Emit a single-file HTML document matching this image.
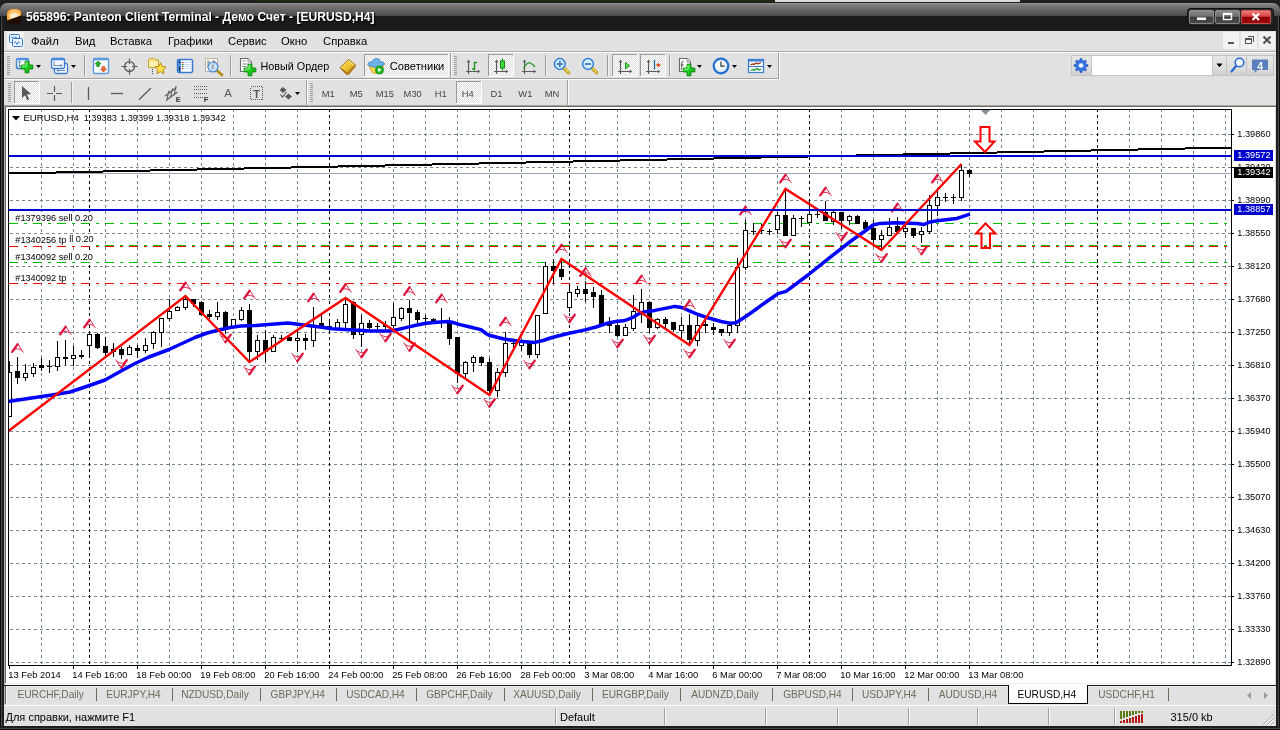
<!DOCTYPE html><html><head><meta charset="utf-8"><title>565896: Panteon Client Terminal</title><style>
*{box-sizing:border-box}
html,body{margin:0;padding:0}
body{width:1280px;height:730px;overflow:hidden;background:#1d1d1d;font-family:"Liberation Sans",sans-serif;}
#root{position:relative;width:1280px;height:730px;overflow:hidden;background:#1d1d1d;will-change:transform;-webkit-font-smoothing:antialiased}
.a{position:absolute}
.t{position:absolute;white-space:pre;line-height:1;color:#000}
#title{left:0;top:3px;width:1280px;height:28px;border-radius:7px 7px 0 0;
 background:linear-gradient(#9a9a9a 0,#858587 1px,#7c7c7e 2px,#6a6a6c 6px,#565658 10px,#48484a 13px,#1b1b1d 13px,#1b1b1d 100%);}
#client{left:4px;top:31px;width:1272px;height:695px;background:#e1e1e1}
.menu{font-size:11.3px;top:35px}
.tab{font-size:10.2px;color:#6e6e5e;top:689px}
.sep{position:absolute;width:1px;background:#8a8a8a}
</style></head><body><div id="root">
<div class="a" style="left:0;top:0;width:1280px;height:3px;background:#202020"></div>
<div class="a" style="left:255px;top:0;width:520px;height:2px;background:#1c2a14"></div>
<div class="a" style="left:775px;top:0;width:245px;height:2px;background:#d4d8dc"></div>
<div id="title" class="a"></div>
<div class="a" style="left:0;top:16px;width:4px;height:714px;background:linear-gradient(90deg,#0c0c0c 0,#0c0c0c 1px,#4a4a4c 1px,#4a4a4c 2px,#1e1e20 2px)"></div>
<div class="a" style="left:1276px;top:16px;width:4px;height:714px;background:linear-gradient(270deg,#0c0c0c 0,#0c0c0c 1px,#4a4a4c 1px,#4a4a4c 2px,#1e1e20 2px)"></div>
<div class="a" style="left:0;top:726px;width:1280px;height:4px;background:linear-gradient(0deg,#0c0c0c 0,#0c0c0c 1px,#4a4a4c 1px,#4a4a4c 2px,#1e1e20 2px)"></div>
<div id="client" class="a"></div>
<span class="t " style="left:26px;top:11px;font-size:12.14px;font-weight:700;color:#fff;text-shadow:1px 1px 1px #000">565896: Panteon Client Terminal - Демо Счет - [EURUSD,H4]</span>
<span class="t menu" style="left:31px;top:35.6px;">Файл</span>
<span class="t menu" style="left:75px;top:35.6px;">Вид</span>
<span class="t menu" style="left:110px;top:35.6px;">Вставка</span>
<span class="t menu" style="left:168px;top:35.6px;">Графики</span>
<span class="t menu" style="left:228px;top:35.6px;">Сервис</span>
<span class="t menu" style="left:281px;top:35.6px;">Окно</span>
<span class="t menu" style="left:323px;top:35.6px;">Справка</span>
<svg class="a" style="left:0;top:0" width="1280" height="110" viewBox="0 0 1280 110">
<defs>
<pattern id="chk" width="2" height="2" patternUnits="userSpaceOnUse"><rect width="2" height="2" fill="#dedede"/><rect width="1" height="1" fill="#fff"/><rect x="1" y="1" width="1" height="1" fill="#fff"/></pattern>
<linearGradient id="gplus" x1="0" y1="0" x2="1" y2="1"><stop offset="0" stop-color="#6cf06c"/><stop offset=".5" stop-color="#1fd01f"/><stop offset="1" stop-color="#0aa00a"/></linearGradient>
<linearGradient id="bwin" x1="0" y1="0" x2="0" y2="1"><stop offset="0" stop-color="#5aa0e6"/><stop offset="1" stop-color="#2f72c4"/></linearGradient>
<linearGradient id="gold" x1="0" y1="0" x2="1" y2="1"><stop offset="0" stop-color="#ffe88a"/><stop offset=".5" stop-color="#f0c030"/><stop offset="1" stop-color="#b07a10"/></linearGradient>
<radialGradient id="clk" cx=".4" cy=".35" r=".7"><stop offset="0" stop-color="#fff"/><stop offset=".7" stop-color="#e8f0f8"/><stop offset="1" stop-color="#b8cde0"/></radialGradient>
<linearGradient id="btnf" x1="0" y1="0" x2="0" y2="1"><stop offset="0" stop-color="#e6e6e6"/><stop offset=".6" stop-color="#dedede"/><stop offset="1" stop-color="#cfcfcf"/></linearGradient>
</defs>
<g shape-rendering="crispEdges">
<rect x="4" y="51" width="1272" height="1" fill="#ababab"/><rect x="4" y="52" width="1272" height="1" fill="#fbfbfb"/>
<rect x="4" y="78" width="776" height="1" fill="#a0a0a0"/><rect x="4" y="79" width="776" height="1" fill="#fbfbfb"/>

<rect x="450" y="53" width="1" height="25" fill="#a0a0a0"/><rect x="451" y="53" width="1" height="25" fill="#fbfbfb"/>
<rect x="778" y="53" width="1" height="26" fill="#a0a0a0"/><rect x="779" y="53" width="1" height="26" fill="#fbfbfb"/>
<rect x="306" y="80" width="1" height="25" fill="#a0a0a0"/><rect x="307" y="80" width="1" height="25" fill="#fbfbfb"/>
<rect x="567" y="80" width="1" height="25" fill="#a0a0a0"/><rect x="568" y="80" width="1" height="25" fill="#fbfbfb"/>
<rect x="7" y="56" width="3" height="1" fill="#9c9c9c"/><rect x="7" y="58" width="3" height="1" fill="#9c9c9c"/><rect x="7" y="60" width="3" height="1" fill="#9c9c9c"/><rect x="7" y="62" width="3" height="1" fill="#9c9c9c"/><rect x="7" y="64" width="3" height="1" fill="#9c9c9c"/><rect x="7" y="66" width="3" height="1" fill="#9c9c9c"/><rect x="7" y="68" width="3" height="1" fill="#9c9c9c"/><rect x="7" y="70" width="3" height="1" fill="#9c9c9c"/><rect x="7" y="72" width="3" height="1" fill="#9c9c9c"/><rect x="7" y="74" width="3" height="1" fill="#9c9c9c"/>
<rect x="454" y="56" width="3" height="1" fill="#9c9c9c"/><rect x="454" y="58" width="3" height="1" fill="#9c9c9c"/><rect x="454" y="60" width="3" height="1" fill="#9c9c9c"/><rect x="454" y="62" width="3" height="1" fill="#9c9c9c"/><rect x="454" y="64" width="3" height="1" fill="#9c9c9c"/><rect x="454" y="66" width="3" height="1" fill="#9c9c9c"/><rect x="454" y="68" width="3" height="1" fill="#9c9c9c"/><rect x="454" y="70" width="3" height="1" fill="#9c9c9c"/><rect x="454" y="72" width="3" height="1" fill="#9c9c9c"/><rect x="454" y="74" width="3" height="1" fill="#9c9c9c"/>
<rect x="8" y="83" width="3" height="1" fill="#9c9c9c"/><rect x="8" y="85" width="3" height="1" fill="#9c9c9c"/><rect x="8" y="87" width="3" height="1" fill="#9c9c9c"/><rect x="8" y="89" width="3" height="1" fill="#9c9c9c"/><rect x="8" y="91" width="3" height="1" fill="#9c9c9c"/><rect x="8" y="93" width="3" height="1" fill="#9c9c9c"/><rect x="8" y="95" width="3" height="1" fill="#9c9c9c"/><rect x="8" y="97" width="3" height="1" fill="#9c9c9c"/><rect x="8" y="99" width="3" height="1" fill="#9c9c9c"/><rect x="8" y="101" width="3" height="1" fill="#9c9c9c"/>
<rect x="310" y="83" width="3" height="1" fill="#9c9c9c"/><rect x="310" y="85" width="3" height="1" fill="#9c9c9c"/><rect x="310" y="87" width="3" height="1" fill="#9c9c9c"/><rect x="310" y="89" width="3" height="1" fill="#9c9c9c"/><rect x="310" y="91" width="3" height="1" fill="#9c9c9c"/><rect x="310" y="93" width="3" height="1" fill="#9c9c9c"/><rect x="310" y="95" width="3" height="1" fill="#9c9c9c"/><rect x="310" y="97" width="3" height="1" fill="#9c9c9c"/><rect x="310" y="99" width="3" height="1" fill="#9c9c9c"/><rect x="310" y="101" width="3" height="1" fill="#9c9c9c"/>
<rect x="84" y="55" width="1" height="21" fill="#9a9a9a"/><rect x="85" y="55" width="1" height="21" fill="#f4f4f4"/>
<rect x="230" y="55" width="1" height="21" fill="#9a9a9a"/><rect x="231" y="55" width="1" height="21" fill="#f4f4f4"/>
<rect x="545" y="55" width="1" height="21" fill="#9a9a9a"/><rect x="546" y="55" width="1" height="21" fill="#f4f4f4"/>
<rect x="607" y="55" width="1" height="21" fill="#9a9a9a"/><rect x="608" y="55" width="1" height="21" fill="#f4f4f4"/>
<rect x="669" y="55" width="1" height="21" fill="#9a9a9a"/><rect x="670" y="55" width="1" height="21" fill="#f4f4f4"/>
<rect x="71" y="82" width="1" height="21" fill="#9a9a9a"/><rect x="72" y="82" width="1" height="21" fill="#f4f4f4"/>
<rect x="365" y="55" width="83" height="21" fill="url(#chk)"/><rect x="364" y="54" width="84" height="1" fill="#9a9a9a"/><rect x="364" y="54" width="1" height="22" fill="#9a9a9a"/><rect x="364" y="76" width="85" height="1" fill="#fff"/><rect x="448" y="54" width="1" height="23" fill="#fff"/>
<rect x="489" y="55" width="24" height="21" fill="url(#chk)"/><rect x="488" y="54" width="25" height="1" fill="#9a9a9a"/><rect x="488" y="54" width="1" height="22" fill="#9a9a9a"/><rect x="488" y="76" width="26" height="1" fill="#fff"/><rect x="513" y="54" width="1" height="23" fill="#fff"/>
<rect x="613" y="55" width="24" height="21" fill="url(#chk)"/><rect x="612" y="54" width="25" height="1" fill="#9a9a9a"/><rect x="612" y="54" width="1" height="22" fill="#9a9a9a"/><rect x="612" y="76" width="26" height="1" fill="#fff"/><rect x="637" y="54" width="1" height="23" fill="#fff"/>
<rect x="641" y="55" width="24" height="21" fill="url(#chk)"/><rect x="640" y="54" width="25" height="1" fill="#9a9a9a"/><rect x="640" y="54" width="1" height="22" fill="#9a9a9a"/><rect x="640" y="76" width="26" height="1" fill="#fff"/><rect x="665" y="54" width="1" height="23" fill="#fff"/>
<rect x="15" y="82" width="24" height="21" fill="url(#chk)"/><rect x="14" y="81" width="25" height="1" fill="#9a9a9a"/><rect x="14" y="81" width="1" height="22" fill="#9a9a9a"/><rect x="14" y="103" width="26" height="1" fill="#fff"/><rect x="39" y="81" width="1" height="23" fill="#fff"/>
<rect x="457" y="82" width="24" height="21" fill="url(#chk)"/><rect x="456" y="81" width="25" height="1" fill="#9a9a9a"/><rect x="456" y="81" width="1" height="22" fill="#9a9a9a"/><rect x="456" y="103" width="26" height="1" fill="#fff"/><rect x="481" y="81" width="1" height="23" fill="#fff"/>
</g>
<rect x="7" y="32" width="17" height="17" fill="#f4f4f4"/>
<g fill="#eef5ff" stroke="#3b7bd8" stroke-width="1"><rect x="9.5" y="34.5" width="10" height="8" rx="1"/><rect x="12.5" y="38.5" width="10" height="8" rx="1"/></g>
<path d="M14 43.5l1.5-2 1.5 3 1.5-3 1.5 2" stroke="#3b7bd8" fill="none" stroke-width=".9"/><path d="M11 37.5h2l1-1 1 1h2" stroke="#3b7bd8" fill="none" stroke-width=".9"/>
<rect x="16.5" y="58.5" width="12" height="10" rx="1.5" fill="#f4f9ff" stroke="url(#bwin)" stroke-width="1.4"/><rect x="16.5" y="58.3" width="12" height="2" fill="#4a8fdc"/>
<path d="M19.5 61v6M18 62.5l1.5-1.5 1.5 1.5M18 65.5l1.5 1.5 1.5-1.5" stroke="#6f8fb0" fill="none" stroke-width="1"/>
<path d="M25.1 61.2H28.9V65.1H32.8V68.9H28.9V72.8H25.1V68.9H21.2V65.1H25.1Z" fill="url(#gplus)" stroke="#0a8a0a" stroke-width="1"/><path d="M26.1 62.2V66.1H22.2" stroke="#8cff8c" stroke-width="1" fill="none" opacity=".9"/>
<path d="M36 65H41L38.5 68Z" fill="#000"/>
<rect x="54.5" y="63.5" width="13" height="10" rx="1.5" fill="#f4f9ff" stroke="#3b7bd0" stroke-width="1.3"/>
<rect x="51.5" y="58.5" width="13" height="10" rx="1.5" fill="#f4f9ff" stroke="#3b7bd0" stroke-width="1.3"/><rect x="51.5" y="58.3" width="13" height="2" fill="#4a8fdc"/>
<path d="M54 61v5M54 65.5h8M60.5 64l1.5 1.5-1.5 1.5M57 70.5h8M58.5 69l-1.5 1.5 1.5 1.5" stroke="#6f8fb0" fill="none" stroke-width="1"/>
<path d="M71 65H76L73.5 68Z" fill="#000"/>
<rect x="93.5" y="58.5" width="15" height="15" rx="1.5" fill="#fbfdff" stroke="#5a9ae0" stroke-width="1.4"/><rect x="93.5" y="58.3" width="15" height="2" fill="#5a9ae0"/>
<path d="M98 61l3 3h-1.7v2.5h-2.6V64H95z" fill="#22b022" stroke="#0f7f0f" stroke-width=".6"/><path d="M103.5 72l3-3h-1.7v-2.5h-2.6V69h-1.7z" fill="#f06a30" stroke="#c0401a" stroke-width=".6"/>
<g stroke="#5a5a5a" fill="none"><circle cx="129.5" cy="66.5" r="5" stroke-width="1.25"/><path d="M129.5 58.5v5.5M129.5 69v5.5M121.5 66.5h5.5M132 66.5h5.5" stroke-width="1.15"/></g>
<path d="M148.5 60.5q0-2 2-2h3q1.5 0 2 1.5h3v7.5h-10z" fill="#fbe58a" stroke="#c9a020" stroke-width="1"/><rect x="149" y="61.5" width="9" height="5.5" fill="#fdf0b0"/>
<path d="M152.5 69v1M152.5 71v1M152.5 73v1" stroke="#444" stroke-width="1"/>
<path d="M160.5 62.8l1.7 3.6 3.9.5-2.9 2.7.8 3.9-3.5-1.9-3.5 1.9.8-3.9-2.9-2.7 3.9-.5z" fill="#ffe04a" stroke="#c08a10" stroke-width="1"/>
<rect x="177.5" y="59.5" width="15" height="13" rx="1.5" fill="#fff" stroke="#3878d0" stroke-width="1.5"/><rect x="178" y="60" width="3" height="12" fill="#4a8ad8"/>
<path d="M183 62.5h9M183 64.5h9M183 66.5h9M183 68.5h9" stroke="#b8d0f0" stroke-width=".8"/><rect x="182" y="62" width="1.3" height="1.2" fill="#e02020"/><rect x="182" y="64" width="1.3" height="1.2" fill="#207020"/><rect x="182" y="66" width="1.3" height="1.2" fill="#207020"/><rect x="182" y="68" width="1.3" height="1.2" fill="#e02020"/><rect x="179" y="61.5" width="1" height="1.5" fill="#111"/><rect x="179" y="67" width="1" height="4" fill="#223"/>
<rect x="205.5" y="58.5" width="12" height="13" fill="#fbf9f2" stroke="#b9b4a4" stroke-width="1"/><path d="M208 60v8M208 62h2M213.5 60v6M213.5 61.5h2" stroke="#777" stroke-width=".9" fill="none"/>
<path d="M217 70.5l5 4.5" stroke="#b8860b" stroke-width="2.6" stroke-linecap="round"/><circle cx="213" cy="67" r="4.9" fill="#cfe4f8" fill-opacity=".85" stroke="#4a90e0" stroke-width="1.3"/><rect x="211.3" y="64.5" width="3" height="5" fill="#8aa0b8" opacity=".7"/>
<path d="M240.5 58.5H248L251.5 62V71.5H240.5Z" fill="#fdfdfd" stroke="#6a6a6a" stroke-width="1.1"/><path d="M248 58.5V62H251.5" fill="#dcdcdc" stroke="#8b8b8b" stroke-width=".8"/>
<path d="M242.5 61h3M242.5 64h6M242.5 66.5h4" stroke="#888" stroke-width="1.2"/>
<path d="M248.1 64.2H251.9V68.1H255.8V71.9H251.9V75.8H248.1V71.9H244.2V68.1H248.1Z" fill="url(#gplus)" stroke="#0a8a0a" stroke-width="1"/><path d="M249.1 65.2V69.1H245.2" stroke="#8cff8c" stroke-width="1" fill="none" opacity=".9"/>
<path d="M340 67.5l8.5-8 7.5 6-7 8.5q-1.5 1-3 0z" fill="url(#gold)" stroke="#a87510" stroke-width="1"/><path d="M341 68.5l6.5 5 7-7.5" fill="none" stroke="#8a5a08" stroke-width="1"/><path d="M348.8 61l5 4" stroke="#fff3b0" stroke-width="1"/>
<path d="M369 66l3.5 6.5q3 1.8 8 0l3-6.5z" fill="#f7d64a" stroke="#c59a1a" stroke-width=".9"/>
<path d="M367.5 64.5q1-3.3 5-2.8 .6-3.2 4-3.2 3.2 0 4 3.2 3.5-.3 4.2 2.4-3.5 3.2-8.5 3.2t-8.7-2.800z" fill="#6db3e8" stroke="#3b86c8" stroke-width=".9"/>
<circle cx="379.5" cy="70" r="4" fill="#22b422" stroke="#0d8a0d" stroke-width=".8"/><path d="M378.2 67.800l3.3 2.2-3.3 2.200z" fill="#fff"/>
<g stroke="#5a5a5a" stroke-width="1.15" fill="none"><path d="M468.5 61V74M466 71.5H479"/></g><path d="M468.5 59.5L470.3 62.3H466.7Z M480.3 71.5L477.7 69.7V73.3Z" fill="#5a5a5a"/>
<path d="M474.5 62v8.500M474.5 62.500h2.500M472 69h2.5" stroke="#1a9a1a" stroke-width="1.4" fill="none"/>
<g stroke="#5a5a5a" stroke-width="1.15" fill="none"><path d="M496.5 61V74M494 71.5H507"/></g><path d="M496.5 59.5L498.3 62.3H494.7Z M508.3 71.5L505.7 69.7V73.3Z" fill="#5a5a5a"/>
<path d="M502.5 58.500v12" stroke="#1a8a1a" stroke-width="1.2"/><rect x="500.5" y="61" width="4" height="7" fill="#3edc3e" stroke="#1a8a1a" stroke-width="1"/>
<g stroke="#5a5a5a" stroke-width="1.15" fill="none"><path d="M524.5 61V74M522 71.5H535"/></g><path d="M524.5 59.5L526.3 62.3H522.7Z M536.3 71.5L533.7 69.7V73.3Z" fill="#5a5a5a"/>
<path d="M523.5 68.500q4-7 7-5.5 2.5 1.5 4.5 4" stroke="#2a9a2a" stroke-width="1.3" fill="none"/>
<path d="M563.8 68L568.5999999999999 72.6" stroke="#b8960c" stroke-width="3.2" stroke-linecap="round"/><path d="M564.3 68L568.5999999999999 72.2" stroke="#f3dc62" stroke-width="1.4" stroke-linecap="round"/><circle cx="559.8" cy="64" r="5.4" fill="#d5ecfb" stroke="#2f7fd6" stroke-width="1.5"/><path d="M556.8 64H562.8" stroke="#3b82b8" stroke-width="1.8"/><path d="M559.8 61V67" stroke="#3b82b8" stroke-width="1.8"/>
<path d="M592 68L596.8 72.6" stroke="#b8960c" stroke-width="3.2" stroke-linecap="round"/><path d="M592.5 68L596.8 72.2" stroke="#f3dc62" stroke-width="1.4" stroke-linecap="round"/><circle cx="588" cy="64" r="5.4" fill="#d5ecfb" stroke="#2f7fd6" stroke-width="1.5"/><path d="M585 64H591" stroke="#3b82b8" stroke-width="1.8"/>
<g stroke="#5a5a5a" stroke-width="1.15" fill="none"><path d="M620.5 61V74M618 71.5H631"/></g><path d="M620.5 59.5L622.3 62.3H618.7Z M632.3 71.5L629.7 69.7V73.3Z" fill="#5a5a5a"/>
<path d="M625.5 62.500l4 3.2-4 3.200z" fill="#5ae05a" stroke="#1a9a1a" stroke-width="1"/>
<g stroke="#5a5a5a" stroke-width="1.15" fill="none"><path d="M648.5 61V74M646 71.5H659"/></g><path d="M648.5 59.5L650.3 62.3H646.7Z M660.3 71.5L657.7 69.7V73.3Z" fill="#5a5a5a"/>
<path d="M654.5 60v9.5" stroke="#1a6aa8" stroke-width="1.3"/><path d="M655.8 65l3.2-2.300v1.600h1.500v1.400h-1.500v1.600z" fill="#e04a10"/>
<path d="M679.5 58.5H687L690.5 62V71.5H679.5Z" fill="#fdfdfd" stroke="#6a6a6a" stroke-width="1.1"/><path d="M687 58.5V62H690.5" fill="#dcdcdc" stroke="#8b8b8b" stroke-width=".8"/>
<path d="M683.5 61.500q-1.8-.2-1.8 1.500v5.500q0 1.2-1 1.200M680.8 65h3" stroke="#555" stroke-width="1" fill="none"/>
<path d="M687.1 64.2H690.9V68.1H694.8V71.9H690.9V75.8H687.1V71.9H683.2V68.1H687.1Z" fill="url(#gplus)" stroke="#0a8a0a" stroke-width="1"/><path d="M688.1 65.2V69.1H684.2" stroke="#8cff8c" stroke-width="1" fill="none" opacity=".9"/>
<path d="M697 65H702L699.5 68Z" fill="#000"/>
<circle cx="721" cy="66" r="7.3" fill="url(#clk)" stroke="#1f6fd0" stroke-width="2.2"/><path d="M721 61.500v4.700h3.6" stroke="#333" stroke-width="1.2" fill="none"/><circle cx="721" cy="66" r="5.8" fill="none" stroke="#9ab" stroke-width=".5" stroke-dasharray=".8 2.2"/>
<path d="M732 65H737L734.5 68Z" fill="#000"/>
<rect x="748.5" y="59.5" width="15" height="13" fill="#f6faff" stroke="#3f7fd0" stroke-width="1.3"/><rect x="748" y="59" width="16" height="2.5" fill="#3f7fd0"/><path d="M749 66.500h14" stroke="#3f7fd0" stroke-width="1"/>
<path d="M750.5 65l2-1 1.5.5 2-1.5 2 .8 3-1.3" stroke="#a02a10" stroke-width="1.2" fill="none"/><path d="M751 70.500l2-1 1.5.8 2.5-2 2 1.7 2-1" stroke="#1a9a2a" stroke-width="1.2" fill="none"/>
<path d="M767 65H772L769.5 68Z" fill="#000"/>
<g shape-rendering="crispEdges"><rect x="1071" y="55" width="203" height="21" fill="#c4c4c4"/><rect x="1072" y="56" width="19" height="19" fill="url(#btnf)"/><rect x="1092" y="56" width="120" height="19" fill="#fff"/><rect x="1213" y="56" width="13" height="19" fill="url(#btnf)"/><rect x="1227" y="56" width="19" height="19" fill="url(#btnf)"/><rect x="1247" y="56" width="26" height="19" fill="url(#btnf)"/></g>
<path d="M1087.94 64.59L1087.94 66.41L1086.02 66.85L1085.51 68.10L1086.55 69.77L1085.27 71.05L1083.60 70.01L1082.35 70.52L1081.91 72.44L1080.09 72.44L1079.65 70.52L1078.40 70.01L1076.73 71.05L1075.45 69.77L1076.49 68.10L1075.98 66.85L1074.06 66.41L1074.06 64.59L1075.98 64.15L1076.49 62.90L1075.45 61.23L1076.73 59.95L1078.40 60.99L1079.65 60.48L1080.09 58.56L1081.91 58.56L1082.35 60.48L1083.60 60.99L1085.27 59.95L1086.55 61.23L1085.51 62.90L1086.02 64.15Z" fill="#2f6fe0" stroke="#1f55c0" stroke-width=".6"/><circle cx="1081" cy="65.5" r="2.3" fill="#fff" stroke="#9ab8f0" stroke-width=".8"/>
<path d="M1217 64H1222L1219.5 67Z" fill="#000"/><path d="M1216.5 63.500h6l-3 3.500z" fill="#000"/>
<path d="M1231.5 71.500l5-6" stroke="#2a6ad8" stroke-width="2.2" stroke-linecap="round"/><circle cx="1239.5" cy="62.5" r="4.3" fill="#f4f9ff" stroke="#2a6ad8" stroke-width="1.6"/>
<path d="M1252 59.500h16v10.500h-10.500l-3 3v-3h-2.500z" fill="#5b7fbe"/>
<g shape-rendering="crispEdges"><rect x="1223" y="32" width="16" height="17" fill="#f2f2f2"/><rect x="1241" y="32" width="16" height="17" fill="#f2f2f2"/><rect x="1259" y="32" width="16" height="17" fill="#f2f2f2"/><rect x="1228" y="42" width="6" height="2" fill="#555"/>
<path d="M1247.5 36.5h6v5" fill="none" stroke="#555" stroke-width="1"/><rect x="1245.5" y="39.5" width="6" height="4" fill="none" stroke="#555"/><rect x="1245" y="38" width="7" height="2" fill="#555"/></g>
<path d="M1263.5 36.5l7 7M1270.5 36.5l-7 7" stroke="#555" stroke-width="2.2"/>
<rect x="1187.5" y="8.5" width="86" height="17" rx="3" fill="#2a2a2a" stroke="#111"/>
<linearGradient id="cb" x1="0" y1="0" x2="0" y2="1"><stop offset="0" stop-color="#8a8a8a"/><stop offset=".45" stop-color="#6e6e6e"/><stop offset=".5" stop-color="#3c3c3c"/><stop offset="1" stop-color="#4a4a4a"/></linearGradient>
<linearGradient id="cr" x1="0" y1="0" x2="0" y2="1"><stop offset="0" stop-color="#f08080"/><stop offset=".45" stop-color="#d84040"/><stop offset=".5" stop-color="#8a0000"/><stop offset="1" stop-color="#a00808"/></linearGradient>
<rect x="1189.5" y="10.5" width="24" height="13" rx="1.5" fill="url(#cb)" stroke="#9a9a9a" stroke-width=".8"/><rect x="1215.5" y="10.5" width="24" height="13" rx="1.5" fill="url(#cb)" stroke="#9a9a9a" stroke-width=".8"/><rect x="1241.5" y="10.5" width="29" height="13" rx="1.5" fill="url(#cr)" stroke="#e06060" stroke-width=".8"/>
<rect x="1197" y="17.5" width="9" height="2.5" fill="#fff"/><rect x="1223.5" y="13.5" width="8" height="6" fill="none" stroke="#fff" stroke-width="1.4"/><rect x="1223" y="13" width="9" height="2" fill="#fff"/><path d="M1252.5 13.500l6.5 6.500M1259 13.500l-6.5 6.5" stroke="#fff" stroke-width="2.2"/>
<defs><radialGradient id="app" cx=".5" cy=".45" r=".6"><stop offset="0" stop-color="#fff6e0"/><stop offset=".45" stop-color="#ffc878"/><stop offset="1" stop-color="#f7941d"/></radialGradient><clipPath id="appc"><path d="M7 20.5L21.5 15.3V6H5V21Z"/></clipPath></defs>
<rect x="7" y="9" width="14.5" height="15.5" rx="5" ry="4.5" fill="#1e0e02"/>
<rect x="7" y="9" width="14.5" height="15.5" rx="5" ry="4.5" fill="url(#app)" clip-path="url(#appc)"/>
<path d="M10 14.5h9M10.500 15v3.500M12.500 15v3.500M14.500 15v3M16.500 15v2.500M18.500 15v2" stroke="#fff" stroke-width=".8" opacity=".75" fill="none" clip-path="url(#appc)"/>
<path d="M22 86v12l3-2.8 2.3 5 1.9-.9-2.3-4.9 4.1-.3z" fill="#5a5a5a"/>
<path d="M54.5 86v6M54.5 95v6M47 93.500h6M56 93.500h6" stroke="#5a5a5a" stroke-width="1.2"/>
<path d="M88.5 87v13" stroke="#5a5a5a" stroke-width="1.3"/><path d="M111 93.500h12" stroke="#5a5a5a" stroke-width="1.3"/><path d="M139 99.700L151 88" stroke="#5a5a5a" stroke-width="1.3"/>
<g stroke="#5a5a5a" stroke-width="1.1" fill="none"><path d="M165 96l11.5-8.500M166 100.500l11.5-8.500M169 90.500l-2 9M172.5 88.500l-2 9M176 86l-2 9.5"/></g>

<g stroke="#5a5a5a" stroke-width="1" stroke-dasharray="1 1"><path d="M194 86.500h13M194 89.500h13M194 93.500h13M194 97.500h10"/></g>
<rect x="250.5" y="86.5" width="12" height="13" fill="none" stroke="#5a5a5a" stroke-width="1" stroke-dasharray="1 1" shape-rendering="crispEdges"/>
<path d="M283 87l3.5 3-3.5 3-3.5-3z M288.5 93.500l3.5 3-3.5 3-3.5-3z" fill="#5a5a5a"/><path d="M280.5 94.500l2 2.5 4-5" stroke="#5a5a5a" stroke-width="1.2" fill="none"/>
<path d="M295 92H300L297.5 95Z" fill="#000"/>
</svg>
<span class="t" style="left:260.5px;top:60.23px;font-size:10.8px;line-height:normal;color:#000;">Новый Ордер</span>
<span class="t" style="left:389.8px;top:59.91px;font-size:11.15px;line-height:normal;color:#000;">Советники</span>
<span class="t" style="left:321.7px;top:88.49px;font-size:9.4px;line-height:normal;color:#444;">M1</span>
<span class="t" style="left:349.7px;top:88.49px;font-size:9.4px;line-height:normal;color:#444;">M5</span>
<span class="t" style="left:375.7px;top:88.49px;font-size:9.4px;line-height:normal;color:#444;">M15</span>
<span class="t" style="left:403.6px;top:88.49px;font-size:9.4px;line-height:normal;color:#444;">M30</span>
<span class="t" style="left:434.8px;top:88.49px;font-size:9.4px;line-height:normal;color:#444;">H1</span>
<span class="t" style="left:461.7px;top:88.49px;font-size:9.4px;line-height:normal;color:#444;">H4</span>
<span class="t" style="left:490.6px;top:88.49px;font-size:9.4px;line-height:normal;color:#444;">D1</span>
<span class="t" style="left:518.3px;top:88.49px;font-size:9.4px;line-height:normal;color:#444;">W1</span>
<span class="t" style="left:544.8px;top:88.49px;font-size:9.4px;line-height:normal;color:#444;">MN</span>
<span class="t" style="left:224.3px;top:87.39px;font-size:11.5px;line-height:normal;color:#5a5a5a;">A</span>
<span class="t" style="left:253.2px;top:88.05px;font-size:11px;line-height:normal;color:#5a5a5a;font-weight:700">T</span>
<span class="t" style="left:175.8px;top:95.21px;font-size:7.5px;line-height:normal;color:#333;font-weight:700">E</span>
<span class="t" style="left:203.8px;top:95.21px;font-size:7.5px;line-height:normal;color:#333;font-weight:700">F</span>
<span class="t" style="left:1257.3px;top:59.50px;font-size:10.5px;line-height:normal;color:#fff;font-weight:700">4</span>
<svg class="a" style="left:0;top:0" width="1280" height="730" viewBox="0 0 1280 730" font-family="Liberation Sans, sans-serif" font-size="9.6">
<rect x="4" y="105" width="1272" height="1" fill="#a6a6a6"/><rect x="4" y="106" width="1272" height="1" fill="#6e6a5a"/><rect x="4" y="106" width="1" height="599" fill="#b4b4b4"/><rect x="5" y="106" width="1" height="577" fill="#6e6a5a"/><rect x="6" y="107" width="1269" height="578" fill="#fff"/><rect x="6" y="683" width="1269" height="1" fill="#f0f0f0"/><rect x="1275" y="107" width="1" height="578" fill="#d8d8d8"/>
<g shape-rendering="crispEdges" fill="none">
<path d="M41.5 110V665" stroke="#778899" stroke-width="1" stroke-dasharray="3 3" stroke-dashoffset="1"/>
<path d="M73.5 110V665" stroke="#778899" stroke-width="1" stroke-dasharray="3 3" stroke-dashoffset="1"/>
<path d="M105.5 110V665" stroke="#778899" stroke-width="1" stroke-dasharray="3 3" stroke-dashoffset="1"/>
<path d="M137.5 110V665" stroke="#778899" stroke-width="1" stroke-dasharray="3 3" stroke-dashoffset="1"/>
<path d="M169.5 110V665" stroke="#778899" stroke-width="1" stroke-dasharray="3 3" stroke-dashoffset="1"/>
<path d="M201.5 110V665" stroke="#778899" stroke-width="1" stroke-dasharray="3 3" stroke-dashoffset="1"/>
<path d="M233.5 110V665" stroke="#778899" stroke-width="1" stroke-dasharray="3 3" stroke-dashoffset="1"/>
<path d="M265.5 110V665" stroke="#778899" stroke-width="1" stroke-dasharray="3 3" stroke-dashoffset="1"/>
<path d="M297.5 110V665" stroke="#778899" stroke-width="1" stroke-dasharray="3 3" stroke-dashoffset="1"/>
<path d="M329.5 110V665" stroke="#778899" stroke-width="1" stroke-dasharray="3 3" stroke-dashoffset="1"/>
<path d="M361.5 110V665" stroke="#778899" stroke-width="1" stroke-dasharray="3 3" stroke-dashoffset="1"/>
<path d="M393.5 110V665" stroke="#778899" stroke-width="1" stroke-dasharray="3 3" stroke-dashoffset="1"/>
<path d="M425.5 110V665" stroke="#778899" stroke-width="1" stroke-dasharray="3 3" stroke-dashoffset="1"/>
<path d="M457.5 110V665" stroke="#778899" stroke-width="1" stroke-dasharray="3 3" stroke-dashoffset="1"/>
<path d="M489.5 110V665" stroke="#778899" stroke-width="1" stroke-dasharray="3 3" stroke-dashoffset="1"/>
<path d="M521.5 110V665" stroke="#778899" stroke-width="1" stroke-dasharray="3 3" stroke-dashoffset="1"/>
<path d="M553.5 110V665" stroke="#778899" stroke-width="1" stroke-dasharray="3 3" stroke-dashoffset="1"/>
<path d="M585.5 110V665" stroke="#778899" stroke-width="1" stroke-dasharray="3 3" stroke-dashoffset="1"/>
<path d="M617.5 110V665" stroke="#778899" stroke-width="1" stroke-dasharray="3 3" stroke-dashoffset="1"/>
<path d="M649.5 110V665" stroke="#778899" stroke-width="1" stroke-dasharray="3 3" stroke-dashoffset="1"/>
<path d="M681.5 110V665" stroke="#778899" stroke-width="1" stroke-dasharray="3 3" stroke-dashoffset="1"/>
<path d="M713.5 110V665" stroke="#778899" stroke-width="1" stroke-dasharray="3 3" stroke-dashoffset="1"/>
<path d="M745.5 110V665" stroke="#778899" stroke-width="1" stroke-dasharray="3 3" stroke-dashoffset="1"/>
<path d="M777.5 110V665" stroke="#778899" stroke-width="1" stroke-dasharray="3 3" stroke-dashoffset="1"/>
<path d="M809.5 110V665" stroke="#778899" stroke-width="1" stroke-dasharray="3 3" stroke-dashoffset="1"/>
<path d="M841.5 110V665" stroke="#778899" stroke-width="1" stroke-dasharray="3 3" stroke-dashoffset="1"/>
<path d="M873.5 110V665" stroke="#778899" stroke-width="1" stroke-dasharray="3 3" stroke-dashoffset="1"/>
<path d="M905.5 110V665" stroke="#778899" stroke-width="1" stroke-dasharray="3 3" stroke-dashoffset="1"/>
<path d="M937.5 110V665" stroke="#778899" stroke-width="1" stroke-dasharray="3 3" stroke-dashoffset="1"/>
<path d="M969.5 110V665" stroke="#778899" stroke-width="1" stroke-dasharray="3 3" stroke-dashoffset="1"/>
<path d="M1001.5 110V665" stroke="#778899" stroke-width="1" stroke-dasharray="3 3" stroke-dashoffset="1"/>
<path d="M1033.5 110V665" stroke="#778899" stroke-width="1" stroke-dasharray="3 3" stroke-dashoffset="1"/>
<path d="M1065.5 110V665" stroke="#778899" stroke-width="1" stroke-dasharray="3 3" stroke-dashoffset="1"/>
<path d="M1097.5 110V665" stroke="#778899" stroke-width="1" stroke-dasharray="3 3" stroke-dashoffset="1"/>
<path d="M1129.5 110V665" stroke="#778899" stroke-width="1" stroke-dasharray="3 3" stroke-dashoffset="1"/>
<path d="M1161.5 110V665" stroke="#778899" stroke-width="1" stroke-dasharray="3 3" stroke-dashoffset="1"/>
<path d="M1193.5 110V665" stroke="#778899" stroke-width="1" stroke-dasharray="3 3" stroke-dashoffset="1"/>
<path d="M1225.5 110V665" stroke="#778899" stroke-width="1" stroke-dasharray="3 3" stroke-dashoffset="1"/>
<path d="M9 134.5H1231" stroke="#778899" stroke-width="1" stroke-dasharray="3 3" stroke-dashoffset="5"/>
<path d="M9 167.5H1231" stroke="#778899" stroke-width="1" stroke-dasharray="3 3" stroke-dashoffset="5"/>
<path d="M9 200.5H1231" stroke="#778899" stroke-width="1" stroke-dasharray="3 3" stroke-dashoffset="5"/>
<path d="M9 233.5H1231" stroke="#778899" stroke-width="1" stroke-dasharray="3 3" stroke-dashoffset="5"/>
<path d="M9 266.5H1231" stroke="#778899" stroke-width="1" stroke-dasharray="3 3" stroke-dashoffset="5"/>
<path d="M9 299.5H1231" stroke="#778899" stroke-width="1" stroke-dasharray="3 3" stroke-dashoffset="5"/>
<path d="M9 332.5H1231" stroke="#778899" stroke-width="1" stroke-dasharray="3 3" stroke-dashoffset="5"/>
<path d="M9 365.5H1231" stroke="#778899" stroke-width="1" stroke-dasharray="3 3" stroke-dashoffset="5"/>
<path d="M9 398.5H1231" stroke="#778899" stroke-width="1" stroke-dasharray="3 3" stroke-dashoffset="5"/>
<path d="M9 431.5H1231" stroke="#778899" stroke-width="1" stroke-dasharray="3 3" stroke-dashoffset="5"/>
<path d="M9 464.5H1231" stroke="#778899" stroke-width="1" stroke-dasharray="3 3" stroke-dashoffset="5"/>
<path d="M9 497.5H1231" stroke="#778899" stroke-width="1" stroke-dasharray="3 3" stroke-dashoffset="5"/>
<path d="M9 530.5H1231" stroke="#778899" stroke-width="1" stroke-dasharray="3 3" stroke-dashoffset="5"/>
<path d="M9 563.5H1231" stroke="#778899" stroke-width="1" stroke-dasharray="3 3" stroke-dashoffset="5"/>
<path d="M9 596.5H1231" stroke="#778899" stroke-width="1" stroke-dasharray="3 3" stroke-dashoffset="5"/>
<path d="M9 629.5H1231" stroke="#778899" stroke-width="1" stroke-dasharray="3 3" stroke-dashoffset="5"/>
<path d="M9 662.5H1231" stroke="#778899" stroke-width="1" stroke-dasharray="3 3" stroke-dashoffset="5"/>
<path d="M89.5 110V665" stroke="#000" stroke-width="1" stroke-dasharray="3 3" stroke-dashoffset="1"/>
<path d="M329.5 110V665" stroke="#000" stroke-width="1" stroke-dasharray="3 3" stroke-dashoffset="1"/>
<path d="M569.5 110V665" stroke="#000" stroke-width="1" stroke-dasharray="3 3" stroke-dashoffset="1"/>
<path d="M809.5 110V665" stroke="#000" stroke-width="1" stroke-dasharray="3 3" stroke-dashoffset="1"/>
<path d="M1097.5 110V665" stroke="#000" stroke-width="1" stroke-dasharray="3 3" stroke-dashoffset="1"/>
<path d="M9 173.5H1231" stroke="#9aa5b1" stroke-width="1"/>
<path d="M9 223.5H1231" stroke="#00c000" stroke-width="1" stroke-dasharray="9 6 3 6" stroke-dashoffset="0"/>
<path d="M9 245.5H1231" stroke="#00c000" stroke-width="1" stroke-dasharray="9 6 3 6" stroke-dashoffset="0"/>
<rect x="9" y="234" width="85" height="12" fill="#fff"/>
<path d="M9 246.5H1231" stroke="#ff0000" stroke-width="1" stroke-dasharray="9 6 3 6" stroke-dashoffset="0"/>
<rect x="14" y="235" width="55" height="11" fill="#fff"/>
<path d="M9 262.5H1231" stroke="#00c000" stroke-width="1" stroke-dasharray="9 6 3 6" stroke-dashoffset="0"/>
<path d="M9 283.5H1231" stroke="#ff0000" stroke-width="1" stroke-dasharray="9 6 3 6" stroke-dashoffset="0"/>
<rect x="14" y="212" width="80" height="11" fill="#fff"/>
<rect x="14" y="251" width="80" height="11" fill="#fff"/>
<rect x="14" y="272" width="54" height="11" fill="#fff"/>
</g>
<g shape-rendering="crispEdges">
<rect x="9" y="361" width="1" height="56" fill="#000"/>
<rect x="7.5" y="372.5" width="4" height="44" fill="#fff" stroke="#000" stroke-width="1"/>
<rect x="17" y="357" width="1" height="27" fill="#000"/>
<rect x="15" y="371" width="5" height="7" fill="#000"/>
<rect x="25" y="364" width="1" height="17" fill="#000"/>
<rect x="23.5" y="373.5" width="4" height="4" fill="#fff" stroke="#000" stroke-width="1"/>
<rect x="33" y="363" width="1" height="14" fill="#000"/>
<rect x="31.5" y="367.5" width="4" height="6" fill="#fff" stroke="#000" stroke-width="1"/>
<rect x="41" y="358" width="1" height="13" fill="#000"/>
<rect x="39" y="365" width="5" height="3" fill="#000"/>
<rect x="49" y="360" width="1" height="13" fill="#000"/>
<rect x="47" y="366" width="5" height="1" fill="#000"/>
<rect x="57" y="341" width="1" height="30" fill="#000"/>
<rect x="55.5" y="357.5" width="4" height="9" fill="#fff" stroke="#000" stroke-width="1"/>
<rect x="65" y="340" width="1" height="25" fill="#000"/>
<rect x="63" y="357" width="5" height="2" fill="#000"/>
<rect x="73" y="346" width="1" height="20" fill="#000"/>
<rect x="71.5" y="355.5" width="4" height="3" fill="#fff" stroke="#000" stroke-width="1"/>
<rect x="81" y="350" width="1" height="9" fill="#000"/>
<rect x="79" y="355" width="5" height="2" fill="#000"/>
<rect x="89" y="333" width="1" height="25" fill="#000"/>
<rect x="87.5" y="334.5" width="4" height="11" fill="#fff" stroke="#000" stroke-width="1"/>
<rect x="97" y="333" width="1" height="16" fill="#000"/>
<rect x="95" y="334" width="5" height="14" fill="#000"/>
<rect x="105" y="337" width="1" height="20" fill="#000"/>
<rect x="103" y="346" width="5" height="7" fill="#000"/>
<rect x="113" y="343" width="1" height="14" fill="#000"/>
<rect x="111" y="349" width="5" height="3" fill="#000"/>
<rect x="121" y="347" width="1" height="12" fill="#000"/>
<rect x="119" y="349" width="5" height="6" fill="#000"/>
<rect x="129" y="345" width="1" height="10" fill="#000"/>
<rect x="127.5" y="347.5" width="4" height="7" fill="#fff" stroke="#000" stroke-width="1"/>
<rect x="137" y="345" width="1" height="13" fill="#000"/>
<rect x="135" y="348" width="5" height="3" fill="#000"/>
<rect x="145" y="338" width="1" height="15" fill="#000"/>
<rect x="143.5" y="345.5" width="4" height="5" fill="#fff" stroke="#000" stroke-width="1"/>
<rect x="153" y="331" width="1" height="18" fill="#000"/>
<rect x="151.5" y="332.5" width="4" height="11" fill="#fff" stroke="#000" stroke-width="1"/>
<rect x="161" y="318" width="1" height="29" fill="#000"/>
<rect x="159.5" y="318.5" width="4" height="14" fill="#fff" stroke="#000" stroke-width="1"/>
<rect x="169" y="299" width="1" height="22" fill="#000"/>
<rect x="167.5" y="311.5" width="4" height="7" fill="#fff" stroke="#000" stroke-width="1"/>
<rect x="177" y="306" width="1" height="5" fill="#000"/>
<rect x="175.5" y="307.5" width="4" height="3" fill="#fff" stroke="#000" stroke-width="1"/>
<rect x="185" y="296" width="1" height="14" fill="#000"/>
<rect x="183.5" y="299.5" width="4" height="8" fill="#fff" stroke="#000" stroke-width="1"/>
<rect x="193" y="299" width="1" height="8" fill="#000"/>
<rect x="191" y="299" width="5" height="5" fill="#000"/>
<rect x="201" y="301" width="1" height="15" fill="#000"/>
<rect x="199" y="302" width="5" height="13" fill="#000"/>
<rect x="209" y="310" width="1" height="9" fill="#000"/>
<rect x="207" y="314" width="5" height="3" fill="#000"/>
<rect x="217" y="302" width="1" height="18" fill="#000"/>
<rect x="215.5" y="312.5" width="4" height="4" fill="#fff" stroke="#000" stroke-width="1"/>
<rect x="225" y="311" width="1" height="23" fill="#000"/>
<rect x="223" y="312" width="5" height="16" fill="#000"/>
<rect x="233" y="319" width="1" height="9" fill="#000"/>
<rect x="231.5" y="319.5" width="4" height="8" fill="#fff" stroke="#000" stroke-width="1"/>
<rect x="241" y="307" width="1" height="14" fill="#000"/>
<rect x="239.5" y="310.5" width="4" height="9" fill="#fff" stroke="#000" stroke-width="1"/>
<rect x="249" y="304" width="1" height="59" fill="#000"/>
<rect x="247" y="310" width="5" height="42" fill="#000"/>
<rect x="257" y="335" width="1" height="25" fill="#000"/>
<rect x="255.5" y="340.5" width="4" height="11" fill="#fff" stroke="#000" stroke-width="1"/>
<rect x="265" y="330" width="1" height="32" fill="#000"/>
<rect x="263" y="340" width="5" height="12" fill="#000"/>
<rect x="273" y="335" width="1" height="17" fill="#000"/>
<rect x="271.5" y="337.5" width="4" height="14" fill="#fff" stroke="#000" stroke-width="1"/>
<rect x="281" y="335" width="1" height="6" fill="#000"/>
<rect x="279" y="338" width="5" height="1" fill="#000"/>
<rect x="289" y="337" width="1" height="4" fill="#000"/>
<rect x="287" y="337" width="5" height="4" fill="#000"/>
<rect x="297" y="331" width="1" height="21" fill="#000"/>
<rect x="295.5" y="338.5" width="4" height="2" fill="#fff" stroke="#000" stroke-width="1"/>
<rect x="305" y="334" width="1" height="16" fill="#000"/>
<rect x="303" y="338" width="5" height="3" fill="#000"/>
<rect x="313" y="307" width="1" height="40" fill="#000"/>
<rect x="311.5" y="325.5" width="4" height="15" fill="#fff" stroke="#000" stroke-width="1"/>
<rect x="321" y="315" width="1" height="12" fill="#000"/>
<rect x="319" y="323" width="5" height="3" fill="#000"/>
<rect x="329" y="319" width="1" height="15" fill="#000"/>
<rect x="327" y="326" width="5" height="1" fill="#000"/>
<rect x="337" y="319" width="1" height="11" fill="#000"/>
<rect x="335.5" y="322.5" width="4" height="7" fill="#fff" stroke="#000" stroke-width="1"/>
<rect x="345" y="298" width="1" height="31" fill="#000"/>
<rect x="343.5" y="304.5" width="4" height="18" fill="#fff" stroke="#000" stroke-width="1"/>
<rect x="353" y="301" width="1" height="38" fill="#000"/>
<rect x="351" y="302" width="5" height="33" fill="#000"/>
<rect x="361" y="315" width="1" height="32" fill="#000"/>
<rect x="359.5" y="323.5" width="4" height="11" fill="#fff" stroke="#000" stroke-width="1"/>
<rect x="369" y="320" width="1" height="9" fill="#000"/>
<rect x="367" y="323" width="5" height="5" fill="#000"/>
<rect x="377" y="323" width="1" height="7" fill="#000"/>
<rect x="375" y="326" width="5" height="1" fill="#000"/>
<rect x="385" y="321" width="1" height="10" fill="#000"/>
<rect x="383.5" y="325.5" width="4" height="1" fill="#fff" stroke="#000" stroke-width="1"/>
<rect x="393" y="303" width="1" height="25" fill="#000"/>
<rect x="391.5" y="317.5" width="4" height="8" fill="#fff" stroke="#000" stroke-width="1"/>
<rect x="401" y="307" width="1" height="14" fill="#000"/>
<rect x="399.5" y="308.5" width="4" height="10" fill="#fff" stroke="#000" stroke-width="1"/>
<rect x="409" y="300" width="1" height="41" fill="#000"/>
<rect x="407" y="308" width="5" height="5" fill="#000"/>
<rect x="417" y="310" width="1" height="15" fill="#000"/>
<rect x="415" y="312" width="5" height="8" fill="#000"/>
<rect x="425" y="315" width="1" height="9" fill="#000"/>
<rect x="423" y="318" width="5" height="1" fill="#000"/>
<rect x="433" y="318" width="1" height="5" fill="#000"/>
<rect x="431" y="319" width="5" height="4" fill="#000"/>
<rect x="441" y="308" width="1" height="20" fill="#000"/>
<rect x="439" y="321" width="5" height="1" fill="#000"/>
<rect x="449" y="317" width="1" height="28" fill="#000"/>
<rect x="447" y="323" width="5" height="16" fill="#000"/>
<rect x="457" y="337" width="1" height="46" fill="#000"/>
<rect x="455" y="337" width="5" height="37" fill="#000"/>
<rect x="465" y="361" width="1" height="17" fill="#000"/>
<rect x="463.5" y="362.5" width="4" height="11" fill="#fff" stroke="#000" stroke-width="1"/>
<rect x="473" y="355" width="1" height="17" fill="#000"/>
<rect x="471.5" y="357.5" width="4" height="5" fill="#fff" stroke="#000" stroke-width="1"/>
<rect x="481" y="356" width="1" height="10" fill="#000"/>
<rect x="479" y="357" width="5" height="6" fill="#000"/>
<rect x="489" y="358" width="1" height="38" fill="#000"/>
<rect x="487" y="362" width="5" height="29" fill="#000"/>
<rect x="497" y="368" width="1" height="29" fill="#000"/>
<rect x="495.5" y="372.5" width="4" height="18" fill="#fff" stroke="#000" stroke-width="1"/>
<rect x="505" y="332" width="1" height="45" fill="#000"/>
<rect x="503.5" y="343.5" width="4" height="29" fill="#fff" stroke="#000" stroke-width="1"/>
<rect x="513" y="340" width="1" height="8" fill="#000"/>
<rect x="511" y="343" width="5" height="1" fill="#000"/>
<rect x="521" y="339" width="1" height="12" fill="#000"/>
<rect x="519.5" y="342.5" width="4" height="3" fill="#fff" stroke="#000" stroke-width="1"/>
<rect x="529" y="343" width="1" height="15" fill="#000"/>
<rect x="527" y="343" width="5" height="12" fill="#000"/>
<rect x="537" y="315" width="1" height="43" fill="#000"/>
<rect x="535.5" y="315.5" width="4" height="39" fill="#fff" stroke="#000" stroke-width="1"/>
<rect x="545" y="262" width="1" height="52" fill="#000"/>
<rect x="543.5" y="266.5" width="4" height="47" fill="#fff" stroke="#000" stroke-width="1"/>
<rect x="553" y="259" width="1" height="25" fill="#000"/>
<rect x="551" y="266" width="5" height="5" fill="#000"/>
<rect x="561" y="259" width="1" height="21" fill="#000"/>
<rect x="559" y="269" width="5" height="8" fill="#000"/>
<rect x="569" y="284" width="1" height="28" fill="#000"/>
<rect x="567.5" y="292.5" width="4" height="15" fill="#fff" stroke="#000" stroke-width="1"/>
<rect x="577" y="286" width="1" height="11" fill="#000"/>
<rect x="575.5" y="289.5" width="4" height="4" fill="#fff" stroke="#000" stroke-width="1"/>
<rect x="585" y="281" width="1" height="21" fill="#000"/>
<rect x="583" y="289" width="5" height="5" fill="#000"/>
<rect x="593" y="287" width="1" height="21" fill="#000"/>
<rect x="591" y="292" width="5" height="5" fill="#000"/>
<rect x="601" y="290" width="1" height="35" fill="#000"/>
<rect x="599" y="295" width="5" height="30" fill="#000"/>
<rect x="609" y="317" width="1" height="16" fill="#000"/>
<rect x="607" y="323" width="5" height="3" fill="#000"/>
<rect x="617" y="321" width="1" height="16" fill="#000"/>
<rect x="615" y="325" width="5" height="11" fill="#000"/>
<rect x="625" y="324" width="1" height="12" fill="#000"/>
<rect x="623.5" y="327.5" width="4" height="8" fill="#fff" stroke="#000" stroke-width="1"/>
<rect x="633" y="295" width="1" height="36" fill="#000"/>
<rect x="631.5" y="311.5" width="4" height="17" fill="#fff" stroke="#000" stroke-width="1"/>
<rect x="641" y="289" width="1" height="34" fill="#000"/>
<rect x="639.5" y="302.5" width="4" height="9" fill="#fff" stroke="#000" stroke-width="1"/>
<rect x="649" y="301" width="1" height="32" fill="#000"/>
<rect x="647" y="302" width="5" height="26" fill="#000"/>
<rect x="657" y="318" width="1" height="11" fill="#000"/>
<rect x="655.5" y="319.5" width="4" height="8" fill="#fff" stroke="#000" stroke-width="1"/>
<rect x="665" y="317" width="1" height="11" fill="#000"/>
<rect x="663" y="319" width="5" height="5" fill="#000"/>
<rect x="673" y="322" width="1" height="10" fill="#000"/>
<rect x="671" y="322" width="5" height="8" fill="#000"/>
<rect x="681" y="317" width="1" height="21" fill="#000"/>
<rect x="679.5" y="325.5" width="4" height="5" fill="#fff" stroke="#000" stroke-width="1"/>
<rect x="689" y="314" width="1" height="32" fill="#000"/>
<rect x="687" y="325" width="5" height="15" fill="#000"/>
<rect x="697" y="316" width="1" height="30" fill="#000"/>
<rect x="695.5" y="325.5" width="4" height="15" fill="#fff" stroke="#000" stroke-width="1"/>
<rect x="705" y="318" width="1" height="15" fill="#000"/>
<rect x="703" y="324" width="5" height="2" fill="#000"/>
<rect x="713" y="323" width="1" height="12" fill="#000"/>
<rect x="711" y="327" width="5" height="3" fill="#000"/>
<rect x="721" y="329" width="1" height="7" fill="#000"/>
<rect x="719" y="329" width="5" height="4" fill="#000"/>
<rect x="729" y="322" width="1" height="14" fill="#000"/>
<rect x="727.5" y="325.5" width="4" height="7" fill="#fff" stroke="#000" stroke-width="1"/>
<rect x="737" y="258" width="1" height="75" fill="#000"/>
<rect x="735.5" y="267.5" width="4" height="58" fill="#fff" stroke="#000" stroke-width="1"/>
<rect x="745" y="220" width="1" height="50" fill="#000"/>
<rect x="743.5" y="230.5" width="4" height="37" fill="#fff" stroke="#000" stroke-width="1"/>
<rect x="753" y="223" width="1" height="12" fill="#000"/>
<rect x="751" y="231" width="5" height="1" fill="#000"/>
<rect x="761" y="224" width="1" height="10" fill="#000"/>
<rect x="759" y="230" width="5" height="1" fill="#000"/>
<rect x="769" y="229" width="1" height="6" fill="#000"/>
<rect x="767" y="231" width="5" height="1" fill="#000"/>
<rect x="777" y="212" width="1" height="22" fill="#000"/>
<rect x="775.5" y="215.5" width="4" height="14" fill="#fff" stroke="#000" stroke-width="1"/>
<rect x="785" y="189" width="1" height="47" fill="#000"/>
<rect x="783" y="215" width="5" height="21" fill="#000"/>
<rect x="793" y="215" width="1" height="21" fill="#000"/>
<rect x="791.5" y="218.5" width="4" height="17" fill="#fff" stroke="#000" stroke-width="1"/>
<rect x="801" y="216" width="1" height="11" fill="#000"/>
<rect x="799" y="218" width="5" height="1" fill="#000"/>
<rect x="809" y="200" width="1" height="23" fill="#000"/>
<rect x="807.5" y="214.5" width="4" height="8" fill="#fff" stroke="#000" stroke-width="1"/>
<rect x="817" y="210" width="1" height="8" fill="#000"/>
<rect x="815" y="214" width="5" height="1" fill="#000"/>
<rect x="825" y="201" width="1" height="20" fill="#000"/>
<rect x="823" y="212" width="5" height="9" fill="#000"/>
<rect x="833" y="211" width="1" height="14" fill="#000"/>
<rect x="831.5" y="212.5" width="4" height="9" fill="#fff" stroke="#000" stroke-width="1"/>
<rect x="841" y="212" width="1" height="17" fill="#000"/>
<rect x="839" y="212" width="5" height="9" fill="#000"/>
<rect x="849" y="215" width="1" height="10" fill="#000"/>
<rect x="847.5" y="216.5" width="4" height="4" fill="#fff" stroke="#000" stroke-width="1"/>
<rect x="857" y="215" width="1" height="9" fill="#000"/>
<rect x="855" y="216" width="5" height="8" fill="#000"/>
<rect x="865" y="220" width="1" height="10" fill="#000"/>
<rect x="863" y="222" width="5" height="7" fill="#000"/>
<rect x="873" y="220" width="1" height="23" fill="#000"/>
<rect x="871" y="228" width="5" height="12" fill="#000"/>
<rect x="881" y="230" width="1" height="21" fill="#000"/>
<rect x="879.5" y="235.5" width="4" height="4" fill="#fff" stroke="#000" stroke-width="1"/>
<rect x="889" y="218" width="1" height="18" fill="#000"/>
<rect x="887.5" y="227.5" width="4" height="8" fill="#fff" stroke="#000" stroke-width="1"/>
<rect x="897" y="217" width="1" height="16" fill="#000"/>
<rect x="895" y="226" width="5" height="6" fill="#000"/>
<rect x="905" y="224" width="1" height="14" fill="#000"/>
<rect x="903.5" y="228.5" width="4" height="3" fill="#fff" stroke="#000" stroke-width="1"/>
<rect x="913" y="228" width="1" height="10" fill="#000"/>
<rect x="911" y="228" width="5" height="8" fill="#000"/>
<rect x="921" y="227" width="1" height="16" fill="#000"/>
<rect x="919.5" y="231.5" width="4" height="3" fill="#fff" stroke="#000" stroke-width="1"/>
<rect x="929" y="195" width="1" height="39" fill="#000"/>
<rect x="927.5" y="205.5" width="4" height="26" fill="#fff" stroke="#000" stroke-width="1"/>
<rect x="937" y="190" width="1" height="26" fill="#000"/>
<rect x="935.5" y="197.5" width="4" height="8" fill="#fff" stroke="#000" stroke-width="1"/>
<rect x="945" y="193" width="1" height="9" fill="#000"/>
<rect x="943" y="197" width="5" height="1" fill="#000"/>
<rect x="953" y="194" width="1" height="10" fill="#000"/>
<rect x="951" y="197" width="5" height="1" fill="#000"/>
<rect x="961" y="164" width="1" height="37" fill="#000"/>
<rect x="959.5" y="170.5" width="4" height="27" fill="#fff" stroke="#000" stroke-width="1"/>
<rect x="969" y="169" width="1" height="8" fill="#000"/>
<rect x="967" y="170" width="5" height="4" fill="#000"/>
</g>
<polyline points="8,401.5 30,398.3 55,394.5 70,392 88,386 105,380 122,370.5 135,363.5 149,357 169,349.5 182,343.5 195,337.5 207,333 219,330 230,327.5 241,326 256,325.4 268,324.4 288,323 306,325.2 320,327 332,328.7 350,329.8 371,331 389,331 398,329.5 407,327.4 416,325.3 426,323.3 437,322.2 448,321.5 453,322.5 459,324.4 470,327 481,329.6 486,333.5 489,335.3 496,337 504,339 519,341.3 535,342.4 543,340.5 552,337.5 568,333.5 585,329.9 596,327 607,323.3 616,321.5 625,320.5 633,317.3 641,312.6 648,311.3 655,310.4 665,308.4 675,306.4 682,307.5 690,311.2 698,314.5 706,317.2 714,319.5 721,321.5 730,323.3 736,322.8 745,317 755,310 766,302 778,293.6 786,291.4 796,284 808,275 830,257.4 851,241 865,231 873,225 880,223.4 895,222.8 917,223.4 924,224.5 930,221.9 939,220.6 957,218.4 970,214.2" fill="none" stroke="#0000ff" stroke-width="3.5" stroke-linejoin="round"/>
<polyline points="8.5,431 185.5,296 249.5,362 345.5,298 489.5,395 561.5,259 689.5,345 785.5,189 881.5,250 961.5,164" fill="none" stroke="#ff0000" stroke-width="2.35" stroke-linejoin="miter"/>
<g stroke="#dc143c" fill="none" stroke-linecap="round"><path d="M17.5 344.3L12.2 351.9" stroke-width="2.3"/><path d="M18.1 344.3L23.1 352.1" stroke-width="1" stroke-dasharray="1.2 0.9"/><path d="M15.0 349.3L18.0 348.7L21.3 350.1" stroke-width="0.9"/></g>
<g stroke="#dc143c" fill="none" stroke-linecap="round"><path d="M65.5 326.8L60.2 334.4" stroke-width="2.3"/><path d="M66.1 326.8L71.1 334.6" stroke-width="1" stroke-dasharray="1.2 0.9"/><path d="M63.0 331.8L66.0 331.2L69.3 332.6" stroke-width="0.9"/></g>
<g stroke="#dc143c" fill="none" stroke-linecap="round"><path d="M89.5 319.8L84.2 327.4" stroke-width="2.3"/><path d="M90.1 319.8L95.1 327.6" stroke-width="1" stroke-dasharray="1.2 0.9"/><path d="M87.0 324.8L90.0 324.2L93.3 325.6" stroke-width="0.9"/></g>
<g stroke="#dc143c" fill="none" stroke-linecap="round"><path d="M185.5 282.8L180.2 290.4" stroke-width="2.3"/><path d="M186.1 282.8L191.1 290.6" stroke-width="1" stroke-dasharray="1.2 0.9"/><path d="M183.0 287.8L186.0 287.2L189.3 288.6" stroke-width="0.9"/></g>
<g stroke="#dc143c" fill="none" stroke-linecap="round"><path d="M249.5 290.8L244.2 298.4" stroke-width="2.3"/><path d="M250.1 290.8L255.1 298.6" stroke-width="1" stroke-dasharray="1.2 0.9"/><path d="M247.0 295.8L250.0 295.2L253.3 296.6" stroke-width="0.9"/></g>
<g stroke="#dc143c" fill="none" stroke-linecap="round"><path d="M313.5 293.8L308.2 301.4" stroke-width="2.3"/><path d="M314.1 293.8L319.1 301.6" stroke-width="1" stroke-dasharray="1.2 0.9"/><path d="M311.0 298.8L314.0 298.2L317.3 299.6" stroke-width="0.9"/></g>
<g stroke="#dc143c" fill="none" stroke-linecap="round"><path d="M345.5 284.3L340.2 291.9" stroke-width="2.3"/><path d="M346.1 284.3L351.1 292.1" stroke-width="1" stroke-dasharray="1.2 0.9"/><path d="M343.0 289.3L346.0 288.7L349.3 290.1" stroke-width="0.9"/></g>
<g stroke="#dc143c" fill="none" stroke-linecap="round"><path d="M409.5 287.3L404.2 294.9" stroke-width="2.3"/><path d="M410.1 287.3L415.1 295.1" stroke-width="1" stroke-dasharray="1.2 0.9"/><path d="M407.0 292.3L410.0 291.7L413.3 293.1" stroke-width="0.9"/></g>
<g stroke="#dc143c" fill="none" stroke-linecap="round"><path d="M441.5 294.8L436.2 302.4" stroke-width="2.3"/><path d="M442.1 294.8L447.1 302.6" stroke-width="1" stroke-dasharray="1.2 0.9"/><path d="M439.0 299.8L442.0 299.2L445.3 300.6" stroke-width="0.9"/></g>
<g stroke="#dc143c" fill="none" stroke-linecap="round"><path d="M505.5 317.8L500.2 325.4" stroke-width="2.3"/><path d="M506.1 317.8L511.1 325.6" stroke-width="1" stroke-dasharray="1.2 0.9"/><path d="M503.0 322.8L506.0 322.2L509.3 323.6" stroke-width="0.9"/></g>
<g stroke="#dc143c" fill="none" stroke-linecap="round"><path d="M561.5 244.8L556.2 252.4" stroke-width="2.3"/><path d="M562.1 244.8L567.1 252.6" stroke-width="1" stroke-dasharray="1.2 0.9"/><path d="M559.0 249.8L562.0 249.2L565.3 250.6" stroke-width="0.9"/></g>
<g stroke="#dc143c" fill="none" stroke-linecap="round"><path d="M585.5 268.3L580.2 275.9" stroke-width="2.3"/><path d="M586.1 268.3L591.1 276.1" stroke-width="1" stroke-dasharray="1.2 0.9"/><path d="M583.0 273.3L586.0 272.7L589.3 274.1" stroke-width="0.9"/></g>
<g stroke="#dc143c" fill="none" stroke-linecap="round"><path d="M641.5 275.8L636.2 283.4" stroke-width="2.3"/><path d="M642.1 275.8L647.1 283.6" stroke-width="1" stroke-dasharray="1.2 0.9"/><path d="M639.0 280.8L642.0 280.2L645.3 281.6" stroke-width="0.9"/></g>
<g stroke="#dc143c" fill="none" stroke-linecap="round"><path d="M689.5 300.8L684.2 308.4" stroke-width="2.3"/><path d="M690.1 300.8L695.1 308.6" stroke-width="1" stroke-dasharray="1.2 0.9"/><path d="M687.0 305.8L690.0 305.2L693.3 306.6" stroke-width="0.9"/></g>
<g stroke="#dc143c" fill="none" stroke-linecap="round"><path d="M745.5 206.8L740.2 214.4" stroke-width="2.3"/><path d="M746.1 206.8L751.1 214.6" stroke-width="1" stroke-dasharray="1.2 0.9"/><path d="M743.0 211.8L746.0 211.2L749.3 212.6" stroke-width="0.9"/></g>
<g stroke="#dc143c" fill="none" stroke-linecap="round"><path d="M785.5 174.8L780.2 182.4" stroke-width="2.3"/><path d="M786.1 174.8L791.1 182.6" stroke-width="1" stroke-dasharray="1.2 0.9"/><path d="M783.0 179.8L786.0 179.2L789.3 180.6" stroke-width="0.9"/></g>
<g stroke="#dc143c" fill="none" stroke-linecap="round"><path d="M825.5 187.8L820.2 195.4" stroke-width="2.3"/><path d="M826.1 187.8L831.1 195.6" stroke-width="1" stroke-dasharray="1.2 0.9"/><path d="M823.0 192.8L826.0 192.2L829.3 193.6" stroke-width="0.9"/></g>
<g stroke="#dc143c" fill="none" stroke-linecap="round"><path d="M897.5 203.8L892.2 211.4" stroke-width="2.3"/><path d="M898.1 203.8L903.1 211.6" stroke-width="1" stroke-dasharray="1.2 0.9"/><path d="M895.0 208.8L898.0 208.2L901.3 209.6" stroke-width="0.9"/></g>
<g stroke="#dc143c" fill="none" stroke-linecap="round"><path d="M937.5 174.8L932.2 182.4" stroke-width="2.3"/><path d="M938.1 174.8L943.1 182.6" stroke-width="1" stroke-dasharray="1.2 0.9"/><path d="M935.0 179.8L938.0 179.2L941.3 180.6" stroke-width="0.9"/></g>
<g stroke="#dc143c" fill="none" stroke-linecap="round"><path d="M121.5 367.7L126.8 360.1" stroke-width="2.3"/><path d="M120.9 367.7L115.9 359.9" stroke-width="1" stroke-dasharray="1.2 0.9"/><path d="M124.0 362.7L121.0 363.3L117.7 361.9" stroke-width="0.9"/></g>
<g stroke="#dc143c" fill="none" stroke-linecap="round"><path d="M225.5 342.2L230.8 334.6" stroke-width="2.3"/><path d="M224.9 342.2L219.9 334.4" stroke-width="1" stroke-dasharray="1.2 0.9"/><path d="M228.0 337.2L225.0 337.8L221.7 336.4" stroke-width="0.9"/></g>
<g stroke="#dc143c" fill="none" stroke-linecap="round"><path d="M249.5 374.2L254.8 366.6" stroke-width="2.3"/><path d="M248.9 374.2L243.9 366.4" stroke-width="1" stroke-dasharray="1.2 0.9"/><path d="M252.0 369.2L249.0 369.8L245.7 368.4" stroke-width="0.9"/></g>
<g stroke="#dc143c" fill="none" stroke-linecap="round"><path d="M297.5 361.2L302.8 353.6" stroke-width="2.3"/><path d="M296.9 361.2L291.9 353.4" stroke-width="1" stroke-dasharray="1.2 0.9"/><path d="M300.0 356.2L297.0 356.8L293.7 355.4" stroke-width="0.9"/></g>
<g stroke="#dc143c" fill="none" stroke-linecap="round"><path d="M361.5 357.2L366.8 349.6" stroke-width="2.3"/><path d="M360.9 357.2L355.9 349.4" stroke-width="1" stroke-dasharray="1.2 0.9"/><path d="M364.0 352.2L361.0 352.8L357.7 351.4" stroke-width="0.9"/></g>
<g stroke="#dc143c" fill="none" stroke-linecap="round"><path d="M385.5 341.2L390.8 333.6" stroke-width="2.3"/><path d="M384.9 341.2L379.9 333.4" stroke-width="1" stroke-dasharray="1.2 0.9"/><path d="M388.0 336.2L385.0 336.8L381.7 335.4" stroke-width="0.9"/></g>
<g stroke="#dc143c" fill="none" stroke-linecap="round"><path d="M409.5 350.7L414.8 343.1" stroke-width="2.3"/><path d="M408.9 350.7L403.9 342.9" stroke-width="1" stroke-dasharray="1.2 0.9"/><path d="M412.0 345.7L409.0 346.3L405.7 344.9" stroke-width="0.9"/></g>
<g stroke="#dc143c" fill="none" stroke-linecap="round"><path d="M457.5 393.2L462.8 385.6" stroke-width="2.3"/><path d="M456.9 393.2L451.9 385.4" stroke-width="1" stroke-dasharray="1.2 0.9"/><path d="M460.0 388.2L457.0 388.8L453.7 387.4" stroke-width="0.9"/></g>
<g stroke="#dc143c" fill="none" stroke-linecap="round"><path d="M489.5 406.7L494.8 399.1" stroke-width="2.3"/><path d="M488.9 406.7L483.9 398.9" stroke-width="1" stroke-dasharray="1.2 0.9"/><path d="M492.0 401.7L489.0 402.3L485.7 400.9" stroke-width="0.9"/></g>
<g stroke="#dc143c" fill="none" stroke-linecap="round"><path d="M529.5 368.2L534.8 360.6" stroke-width="2.3"/><path d="M528.9 368.2L523.9 360.4" stroke-width="1" stroke-dasharray="1.2 0.9"/><path d="M532.0 363.2L529.0 363.8L525.7 362.4" stroke-width="0.9"/></g>
<g stroke="#dc143c" fill="none" stroke-linecap="round"><path d="M569.5 322.2L574.8 314.6" stroke-width="2.3"/><path d="M568.9 322.2L563.9 314.4" stroke-width="1" stroke-dasharray="1.2 0.9"/><path d="M572.0 317.2L569.0 317.8L565.7 316.4" stroke-width="0.9"/></g>
<g stroke="#dc143c" fill="none" stroke-linecap="round"><path d="M617.5 347.2L622.8 339.6" stroke-width="2.3"/><path d="M616.9 347.2L611.9 339.4" stroke-width="1" stroke-dasharray="1.2 0.9"/><path d="M620.0 342.2L617.0 342.8L613.7 341.4" stroke-width="0.9"/></g>
<g stroke="#dc143c" fill="none" stroke-linecap="round"><path d="M649.5 343.2L654.8 335.6" stroke-width="2.3"/><path d="M648.9 343.2L643.9 335.4" stroke-width="1" stroke-dasharray="1.2 0.9"/><path d="M652.0 338.2L649.0 338.8L645.7 337.4" stroke-width="0.9"/></g>
<g stroke="#dc143c" fill="none" stroke-linecap="round"><path d="M689.5 357.2L694.8 349.6" stroke-width="2.3"/><path d="M688.9 357.2L683.9 349.4" stroke-width="1" stroke-dasharray="1.2 0.9"/><path d="M692.0 352.2L689.0 352.8L685.7 351.4" stroke-width="0.9"/></g>
<g stroke="#dc143c" fill="none" stroke-linecap="round"><path d="M729.5 347.2L734.8 339.6" stroke-width="2.3"/><path d="M728.9 347.2L723.9 339.4" stroke-width="1" stroke-dasharray="1.2 0.9"/><path d="M732.0 342.2L729.0 342.8L725.7 341.4" stroke-width="0.9"/></g>
<g stroke="#dc143c" fill="none" stroke-linecap="round"><path d="M785.5 247.2L790.8 239.6" stroke-width="2.3"/><path d="M784.9 247.2L779.9 239.4" stroke-width="1" stroke-dasharray="1.2 0.9"/><path d="M788.0 242.2L785.0 242.8L781.7 241.4" stroke-width="0.9"/></g>
<g stroke="#dc143c" fill="none" stroke-linecap="round"><path d="M841.5 240.2L846.8 232.6" stroke-width="2.3"/><path d="M840.9 240.2L835.9 232.4" stroke-width="1" stroke-dasharray="1.2 0.9"/><path d="M844.0 235.2L841.0 235.8L837.7 234.4" stroke-width="0.9"/></g>
<g stroke="#dc143c" fill="none" stroke-linecap="round"><path d="M881.5 261.7L886.8 254.1" stroke-width="2.3"/><path d="M880.9 261.7L875.9 253.9" stroke-width="1" stroke-dasharray="1.2 0.9"/><path d="M884.0 256.7L881.0 257.3L877.7 255.9" stroke-width="0.9"/></g>
<g stroke="#dc143c" fill="none" stroke-linecap="round"><path d="M921.5 254.2L926.8 246.6" stroke-width="2.3"/><path d="M920.9 254.2L915.9 246.4" stroke-width="1" stroke-dasharray="1.2 0.9"/><path d="M924.0 249.2L921.0 249.8L917.7 248.4" stroke-width="0.9"/></g>
<g fill="#000" shape-rendering="crispEdges"><rect x="9" y="172" width="47" height="2"/><rect x="56" y="171" width="47" height="2"/><rect x="103" y="170" width="47" height="2"/><rect x="150" y="169" width="47" height="2"/><rect x="197" y="168" width="47" height="2"/><rect x="244" y="167" width="47" height="2"/><rect x="291" y="166" width="47" height="2"/><rect x="338" y="165" width="47" height="2"/><rect x="385" y="164" width="47" height="2"/><rect x="432" y="163" width="47" height="2"/><rect x="479" y="162" width="47" height="2"/><rect x="526" y="161" width="47" height="2"/><rect x="573" y="160" width="47" height="2"/><rect x="620" y="159" width="47" height="2"/><rect x="667" y="158" width="47" height="2"/><rect x="714" y="157" width="47" height="2"/><rect x="761" y="156" width="47" height="2"/><rect x="808" y="155" width="48" height="2"/><rect x="856" y="154" width="47" height="2"/><rect x="903" y="153" width="47" height="2"/><rect x="950" y="152" width="47" height="2"/><rect x="997" y="151" width="47" height="2"/><rect x="1044" y="150" width="47" height="2"/><rect x="1091" y="149" width="47" height="2"/><rect x="1138" y="148" width="47" height="2"/><rect x="1185" y="147" width="46" height="2"/></g>
<g shape-rendering="crispEdges">
<rect x="9" y="155" width="1222" height="2" fill="#0000cd"/>
<rect x="9" y="209" width="1222" height="2" fill="#0000cd"/>
</g>
<path d="M980.5 127H989.5V141.5H994.5L985 152L975 141.5H980.5Z" fill="none" stroke="#ff0000" stroke-width="2" stroke-linejoin="miter"/>
<path d="M981.5 248H990V233.5H995.5L985.5 223.5L976 233.5H981.5Z" fill="none" stroke="#ff0000" stroke-width="2" stroke-linejoin="miter"/>
<path d="M981 110H990L985.5 115Z" fill="#7f8c99"/>
<g shape-rendering="crispEdges">
<path d="M8.5 109.5H1231.5V665.5H8.5Z" fill="none" stroke="#000" stroke-width="1"/>
<rect x="6" y="110" width="2" height="555" fill="#fff"/>
<rect x="1232" y="134" width="2" height="1" fill="#000"/>
<rect x="1232" y="167" width="2" height="1" fill="#000"/>
<rect x="1232" y="200" width="2" height="1" fill="#000"/>
<rect x="1232" y="233" width="2" height="1" fill="#000"/>
<rect x="1232" y="266" width="2" height="1" fill="#000"/>
<rect x="1232" y="299" width="2" height="1" fill="#000"/>
<rect x="1232" y="332" width="2" height="1" fill="#000"/>
<rect x="1232" y="365" width="2" height="1" fill="#000"/>
<rect x="1232" y="398" width="2" height="1" fill="#000"/>
<rect x="1232" y="431" width="2" height="1" fill="#000"/>
<rect x="1232" y="464" width="2" height="1" fill="#000"/>
<rect x="1232" y="497" width="2" height="1" fill="#000"/>
<rect x="1232" y="530" width="2" height="1" fill="#000"/>
<rect x="1232" y="563" width="2" height="1" fill="#000"/>
<rect x="1232" y="596" width="2" height="1" fill="#000"/>
<rect x="1232" y="629" width="2" height="1" fill="#000"/>
<rect x="1232" y="662" width="2" height="1" fill="#000"/>
<rect x="9" y="666" width="1" height="3" fill="#000"/>
<rect x="73" y="666" width="1" height="3" fill="#000"/>
<rect x="137" y="666" width="1" height="3" fill="#000"/>
<rect x="201" y="666" width="1" height="3" fill="#000"/>
<rect x="265" y="666" width="1" height="3" fill="#000"/>
<rect x="329" y="666" width="1" height="3" fill="#000"/>
<rect x="393" y="666" width="1" height="3" fill="#000"/>
<rect x="457" y="666" width="1" height="3" fill="#000"/>
<rect x="521" y="666" width="1" height="3" fill="#000"/>
<rect x="585" y="666" width="1" height="3" fill="#000"/>
<rect x="649" y="666" width="1" height="3" fill="#000"/>
<rect x="713" y="666" width="1" height="3" fill="#000"/>
<rect x="777" y="666" width="1" height="3" fill="#000"/>
<rect x="841" y="666" width="1" height="3" fill="#000"/>
<rect x="905" y="666" width="1" height="3" fill="#000"/>
<rect x="969" y="666" width="1" height="3" fill="#000"/>
<rect x="1234" y="150" width="39" height="11" fill="#0000cd"/>
<rect x="1234" y="204" width="39" height="11" fill="#0000cd"/>
</g>
<text transform="translate(1237.3 136.6) scale(.96 1)" fill="#000">1.39860</text>
<text transform="translate(1237.3 169.6) scale(.96 1)" fill="#000">1.39420</text>
<text transform="translate(1237.3 202.6) scale(.96 1)" fill="#000">1.38990</text>
<text transform="translate(1237.3 235.6) scale(.96 1)" fill="#000">1.38550</text>
<text transform="translate(1237.3 268.6) scale(.96 1)" fill="#000">1.38120</text>
<text transform="translate(1237.3 301.6) scale(.96 1)" fill="#000">1.37680</text>
<text transform="translate(1237.3 334.6) scale(.96 1)" fill="#000">1.37250</text>
<text transform="translate(1237.3 367.6) scale(.96 1)" fill="#000">1.36810</text>
<text transform="translate(1237.3 400.6) scale(.96 1)" fill="#000">1.36370</text>
<text transform="translate(1237.3 433.6) scale(.96 1)" fill="#000">1.35940</text>
<text transform="translate(1237.3 466.6) scale(.96 1)" fill="#000">1.35500</text>
<text transform="translate(1237.3 499.6) scale(.96 1)" fill="#000">1.35070</text>
<text transform="translate(1237.3 532.6) scale(.96 1)" fill="#000">1.34630</text>
<text transform="translate(1237.3 565.6) scale(.96 1)" fill="#000">1.34200</text>
<text transform="translate(1237.3 598.6) scale(.96 1)" fill="#000">1.33760</text>
<text transform="translate(1237.3 631.6) scale(.96 1)" fill="#000">1.33330</text>
<text transform="translate(1237.3 664.6) scale(.96 1)" fill="#000">1.32890</text>
<rect x="1234" y="167" width="39" height="11" fill="#000" shape-rendering="crispEdges"/>
<text transform="translate(1237.3 158.4) scale(.96 1)" fill="#fff">1.39572</text>
<text transform="translate(1237.3 175.4) scale(.96 1)" fill="#fff">1.39342</text>
<text transform="translate(1237.3 212.4) scale(.96 1)" fill="#fff">1.38857</text>
<text transform="translate(8.3 678) scale(.975 1)">13 Feb 2014</text>
<text transform="translate(72.3 678) scale(.975 1)">14 Feb 16:00</text>
<text transform="translate(136.3 678) scale(.975 1)">18 Feb 00:00</text>
<text transform="translate(200.3 678) scale(.975 1)">19 Feb 08:00</text>
<text transform="translate(264.3 678) scale(.975 1)">20 Feb 16:00</text>
<text transform="translate(328.3 678) scale(.975 1)">24 Feb 00:00</text>
<text transform="translate(392.3 678) scale(.975 1)">25 Feb 08:00</text>
<text transform="translate(456.3 678) scale(.975 1)">26 Feb 16:00</text>
<text transform="translate(520.3 678) scale(.975 1)">28 Feb 00:00</text>
<text transform="translate(584.3 678) scale(.975 1)">3 Mar 08:00</text>
<text transform="translate(648.3 678) scale(.975 1)">4 Mar 16:00</text>
<text transform="translate(712.3 678) scale(.975 1)">6 Mar 00:00</text>
<text transform="translate(776.3 678) scale(.975 1)">7 Mar 08:00</text>
<text transform="translate(840.3 678) scale(.975 1)">10 Mar 16:00</text>
<text transform="translate(904.3 678) scale(.975 1)">12 Mar 00:00</text>
<text transform="translate(968.3 678) scale(.975 1)">13 Mar 08:00</text>
<text transform="translate(15.3 221) scale(.96 1)" fill="#000">#1379396 sell 0.20</text>
<text transform="translate(69.2 242) scale(.96 1)" fill="#000">ll 0.20</text>
<text transform="translate(15.3 243) scale(.96 1)" fill="#000">#1340256 tp</text>
<text transform="translate(15.3 260) scale(.96 1)" fill="#000">#1340092 sell 0.20</text>
<text transform="translate(15.3 281) scale(.96 1)" fill="#000">#1340092 tp</text>
<path d="M12 116H20L16 120.5Z" fill="#000"/>
<text transform="translate(23.4 121)">EURUSD,H4</text>
<text transform="translate(83.7 121) scale(.96 1)" fill="#000">1.39383</text>
<text transform="translate(120.1 121) scale(.96 1)" fill="#000">1.39399</text>
<text transform="translate(156.1 121) scale(.96 1)" fill="#000">1.39318</text>
<text transform="translate(192.3 121) scale(.96 1)" fill="#000">1.39342</text>
</svg>
<svg class="a" style="left:0;top:680px" width="1280" height="50" viewBox="0 680 1280 50" shape-rendering="crispEdges">
<rect x="4" y="686" width="1272" height="19" fill="#e1e1e1"/>
<rect x="4" y="685" width="1272" height="1" fill="#1a1a1a"/>
<rect x="4" y="686" width="1272" height="1" fill="#f0f0f0"/><rect x="4" y="686" width="1" height="19" fill="#b4b4b4"/><rect x="5" y="686" width="1" height="18" fill="#6e6a5a"/><rect x="6" y="686" width="1" height="18" fill="#f4f4f4"/>
<rect x="1008" y="685" width="80" height="19" fill="#fff"/>
<path d="M1008.500 685V703.500H1087.500V685" fill="none" stroke="#000"/>
<rect x="96" y="688" width="1" height="13" fill="#6e6a5a"/>
<rect x="172" y="688" width="1" height="13" fill="#6e6a5a"/>
<rect x="260" y="688" width="1" height="13" fill="#6e6a5a"/>
<rect x="336" y="688" width="1" height="13" fill="#6e6a5a"/>
<rect x="416" y="688" width="1" height="13" fill="#6e6a5a"/>
<rect x="504" y="688" width="1" height="13" fill="#6e6a5a"/>
<rect x="592" y="688" width="1" height="13" fill="#6e6a5a"/>
<rect x="680" y="688" width="1" height="13" fill="#6e6a5a"/>
<rect x="772" y="688" width="1" height="13" fill="#6e6a5a"/>
<rect x="852" y="688" width="1" height="13" fill="#6e6a5a"/>
<rect x="928" y="688" width="1" height="13" fill="#6e6a5a"/>
<rect x="1168" y="688" width="1" height="13" fill="#6e6a5a"/>
<path d="M1251 692v7l-4-3.500z M1264 692v7l4-3.500z" fill="#9a9a9a" shape-rendering="auto"/>
<rect x="4" y="705" width="1272" height="1" fill="#fbfbfb"/>
<rect x="555" y="708" width="1" height="17" fill="#a0a0a0"/><rect x="556" y="708" width="1" height="17" fill="#fbfbfb"/>
<rect x="664" y="708" width="1" height="17" fill="#a0a0a0"/><rect x="665" y="708" width="1" height="17" fill="#fbfbfb"/>
<rect x="765" y="708" width="1" height="17" fill="#a0a0a0"/><rect x="766" y="708" width="1" height="17" fill="#fbfbfb"/>
<rect x="837" y="708" width="1" height="17" fill="#a0a0a0"/><rect x="838" y="708" width="1" height="17" fill="#fbfbfb"/>
<rect x="908" y="708" width="1" height="17" fill="#a0a0a0"/><rect x="909" y="708" width="1" height="17" fill="#fbfbfb"/>
<rect x="977" y="708" width="1" height="17" fill="#a0a0a0"/><rect x="978" y="708" width="1" height="17" fill="#fbfbfb"/>
<rect x="1048" y="708" width="1" height="17" fill="#a0a0a0"/><rect x="1049" y="708" width="1" height="17" fill="#fbfbfb"/>
<rect x="1114" y="708" width="1" height="17" fill="#a0a0a0"/><rect x="1115" y="708" width="1" height="17" fill="#fbfbfb"/>
<rect x="1120" y="711" width="2" height="8" fill="#5a7a1a"/>
<rect x="1120" y="721" width="2" height="2" fill="#b01818"/>
<rect x="1123" y="711" width="2" height="7" fill="#5a7a1a"/>
<rect x="1123" y="720" width="2" height="3" fill="#b01818"/>
<rect x="1126" y="711" width="2" height="6" fill="#5a7a1a"/>
<rect x="1126" y="719" width="2" height="4" fill="#b01818"/>
<rect x="1129" y="711" width="2" height="5" fill="#5a7a1a"/>
<rect x="1129" y="718" width="2" height="5" fill="#b01818"/>
<rect x="1132" y="711" width="2" height="4" fill="#5a7a1a"/>
<rect x="1132" y="717" width="2" height="6" fill="#b01818"/>
<rect x="1135" y="711" width="2" height="3" fill="#5a7a1a"/>
<rect x="1135" y="716" width="2" height="7" fill="#b01818"/>
<rect x="1138" y="711" width="2" height="2" fill="#5a7a1a"/>
<rect x="1138" y="715" width="2" height="8" fill="#b01818"/>
<rect x="1141" y="711" width="2" height="2" fill="#5a7a1a"/>
<rect x="1141" y="714" width="2" height="9" fill="#b01818"/>
<g shape-rendering="auto" stroke="#a8a8a8" stroke-width="1"><path d="M1263 725l11-11M1267 725l7-7M1271 725l3-3"/></g><g shape-rendering="auto" stroke="#fff" stroke-width="1"><path d="M1264 725l10-10M1268 725l6-6M1272 725l2-2"/></g>
</svg>
<span class="t" style="left:17.5px;top:689.01px;font-size:10.15px;line-height:normal;color:#6e6a5a;">EURCHF,Daily</span>
<span class="t" style="left:106.2px;top:689.01px;font-size:10.15px;line-height:normal;color:#6e6a5a;">EURJPY,H4</span>
<span class="t" style="left:181.2px;top:689.01px;font-size:10.15px;line-height:normal;color:#6e6a5a;">NZDUSD,Daily</span>
<span class="t" style="left:270.5px;top:689.01px;font-size:10.15px;line-height:normal;color:#6e6a5a;">GBPJPY,H4</span>
<span class="t" style="left:346.2px;top:689.01px;font-size:10.15px;line-height:normal;color:#6e6a5a;">USDCAD,H4</span>
<span class="t" style="left:426.2px;top:689.01px;font-size:10.15px;line-height:normal;color:#6e6a5a;">GBPCHF,Daily</span>
<span class="t" style="left:513.2px;top:689.01px;font-size:10.15px;line-height:normal;color:#6e6a5a;">XAUUSD,Daily</span>
<span class="t" style="left:602px;top:689.01px;font-size:10.15px;line-height:normal;color:#6e6a5a;">EURGBP,Daily</span>
<span class="t" style="left:691.2px;top:689.01px;font-size:10.15px;line-height:normal;color:#6e6a5a;">AUDNZD,Daily</span>
<span class="t" style="left:783.2px;top:689.01px;font-size:10.15px;line-height:normal;color:#6e6a5a;">GBPUSD,H4</span>
<span class="t" style="left:862px;top:689.01px;font-size:10.15px;line-height:normal;color:#6e6a5a;">USDJPY,H4</span>
<span class="t" style="left:938.7px;top:689.01px;font-size:10.15px;line-height:normal;color:#6e6a5a;">AUDUSD,H4</span>
<span class="t" style="left:1098.2px;top:689.01px;font-size:10.15px;line-height:normal;color:#6e6a5a;">USDCHF,H1</span>
<span class="t" style="left:1017.5px;top:689.01px;font-size:10.15px;line-height:normal;color:#000;">EURUSD,H4</span>
<span class="t" style="left:5.5px;top:711.04px;font-size:11px;line-height:normal;color:#000;">Для справки, нажмите F1</span>
<span class="t" style="left:560px;top:711.04px;font-size:11px;line-height:normal;color:#000;">Default</span>
<span class="t" style="left:1170.5px;top:711.04px;font-size:11px;line-height:normal;color:#000;">315/0 kb</span>
</div></body></html>
